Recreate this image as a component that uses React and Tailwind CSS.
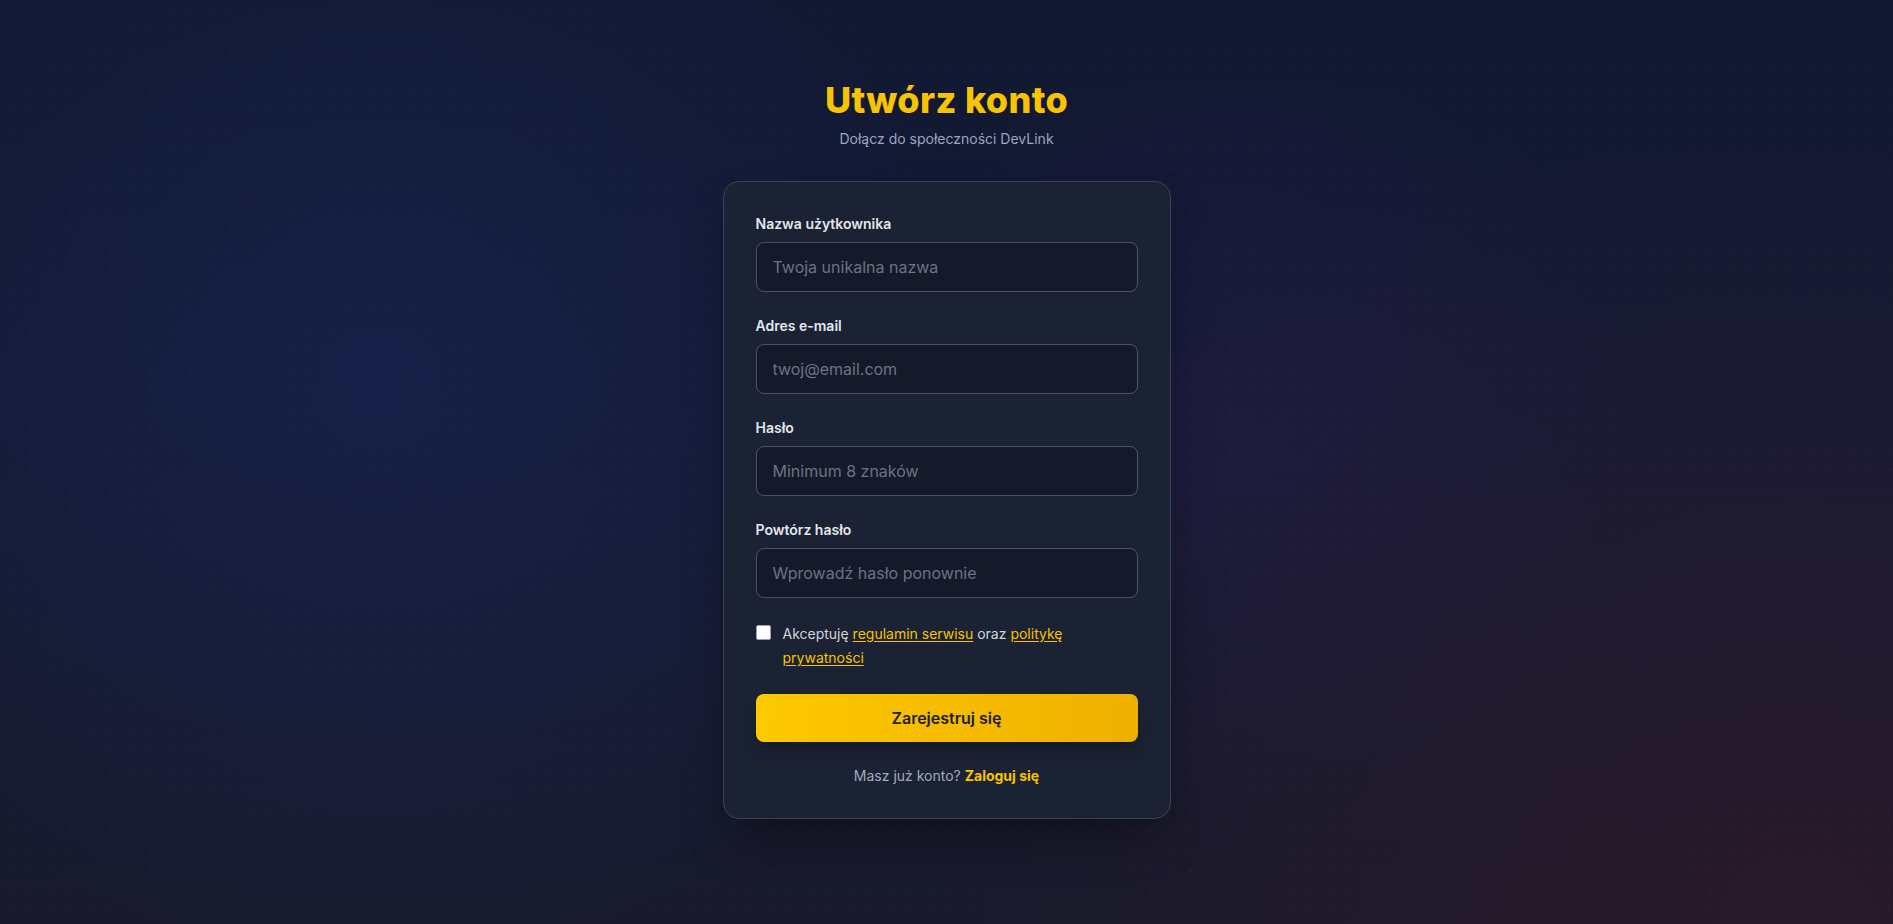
export default function App() {
	return (
		<div
			className="min-h-screen w-full bg-[#111832] text-gray-200 bg-[radial-gradient(circle_at_20%_40%,rgba(30,45,110,0.32),transparent_38%),radial-gradient(circle_at_65%_45%,rgba(70,35,110,0.16),transparent_30%),radial-gradient(circle_at_95%_100%,rgba(70,25,35,0.35),transparent_42%),linear-gradient(180deg,#111831_0%,#141a35_45%,#181a2c_100%)]"
			style={{ fontFamily: "Inter, 'Noto Sans', sans-serif" }}
		>
			<div className="min-h-screen w-full bg-[radial-gradient(rgba(255,255,255,0.035)_1px,transparent_1px)] bg-[length:20px_20px] flex flex-col items-center pt-[80px] pb-24">
				{/* Header */}
				<div className="text-center">
					<h1 className="text-[36px] leading-10 font-extrabold text-[#f8c300] tracking-[0.01em]">
						Utwórz konto
					</h1>
					<p className="mt-[9px] text-sm text-[#9aa6bf]">
						Dołącz do społeczności DevLink
					</p>
				</div>

				{/* Card */}
				<div className="mt-8 w-[448px] rounded-2xl border border-[#394257] bg-[#1b2233] p-8 shadow-2xl shadow-black/40">
					<form className="space-y-6" onSubmit={(e) => e.preventDefault()}>
						<Field
							label="Nazwa użytkownika"
							type="text"
							placeholder="Twoja unikalna nazwa"
						/>
						<Field
							label="Adres e-mail"
							type="email"
							placeholder="twoj@email.com"
						/>
						<Field
							label="Hasło"
							type="password"
							placeholder="Minimum 8 znaków"
						/>
						<Field
							label="Powtórz hasło"
							type="password"
							placeholder="Wprowadź hasło ponownie"
						/>

						{/* Terms */}
						<label className="flex items-start gap-3 text-sm leading-6 text-gray-300">
							<input
								type="checkbox"
								className="mt-[3px] h-[15px] w-[15px] shrink-0 appearance-none rounded-[2px] border border-gray-400 bg-white"
							/>
							<span>
								Akceptuję{" "}
								<a href="#" className="text-[#f8c300] underline underline-offset-2">
									regulamin serwisu
								</a>{" "}
								oraz{" "}
								<a href="#" className="text-[#f8c300] underline underline-offset-2">
									politykę prywatności
								</a>
							</span>
						</label>

						<button
							type="submit"
							className="w-full rounded-lg bg-[linear-gradient(100deg,#fdc900,#eeb000)] py-3 text-base font-semibold text-[#1c2130] shadow-lg shadow-black/20"
						>
							Zarejestruj się
						</button>
					</form>

					<p className="mt-6 text-center text-sm text-[#a3aabb]">
						Masz już konto?{" "}
						<a href="#" className="font-bold text-[#f8c300]">
							Zaloguj się
						</a>
					</p>
				</div>
			</div>
		</div>
	);
}

function Field({ label, type, placeholder }) {
	return (
		<div>
			<label className="mb-2 block text-sm font-semibold text-gray-200">
				{label}
			</label>
			<input
				type={type}
				placeholder={placeholder}
				className="block w-full rounded-lg border border-[#4a5366] bg-[#141a2a] px-4 py-3 text-base text-gray-200 placeholder:text-[#6b7385] outline-none"
			/>
		</div>
	);
}
